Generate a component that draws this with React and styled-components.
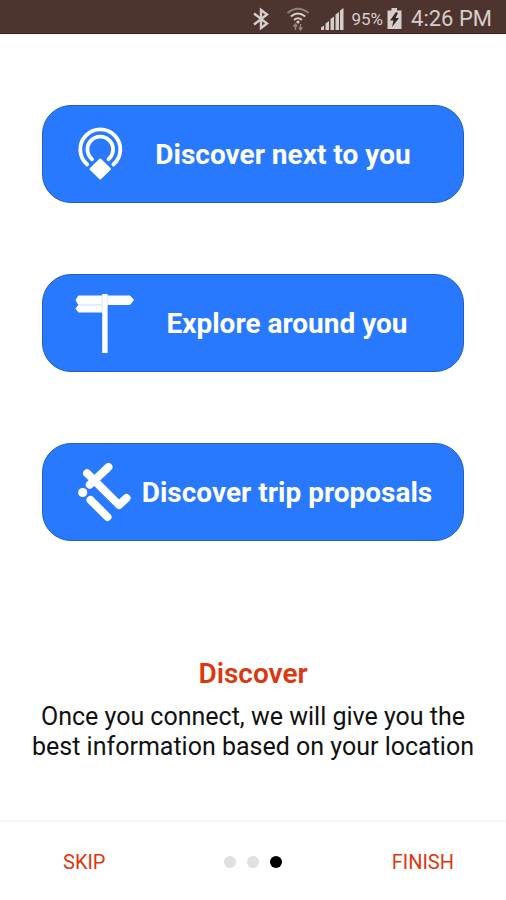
import React from "react";
import styled, { createGlobalStyle } from "styled-components";

const GlobalStyle = createGlobalStyle`
  * { box-sizing: border-box; }
  body { margin: 0; background: #fff; font-family: Roboto, sans-serif; }
  button { font-family: inherit; cursor: pointer; }
`;

const Screen = styled.div`
  display: flex;
  flex-direction: column;
  min-height: 100vh;
`;

const StatusBar = styled.header`
  display: flex;
  align-items: center;
  justify-content: flex-end;
  height: 34px;
  padding: 4px 14px 0 0;
  background: #4e342e;
  border-bottom: 1px solid #3a211d;
  color: #d6cdcb;
`;

const StatusIcon = styled.svg`
  display: block;
  flex: none;
  margin-right: ${(p) => p.$gap}px;
`;

const Battery = styled.span`
  margin-right: 4px;
  font-size: 17px;
`;

const Clock = styled.time`
  font-size: 22px;
`;

const Content = styled.main`
  flex: 1;
  padding: 71px 0 0;
`;

const Actions = styled.nav`
  display: flex;
  flex-direction: column;
  gap: 71px;
  padding: 0 42px;
`;

const ActionButton = styled.button`
  display: flex;
  align-items: center;
  width: 100%;
  height: 98px;
  padding: 2px 24px 0 32px;
  border: 1px solid #1f5fc4;
  border-radius: 29px;
  background: #2979ff;
  color: #fff;
`;

const ActionIcon = styled.svg`
  display: block;
  flex: none;
`;

const ActionLabel = styled.span`
  flex: 1;
  font-size: 28px;
  font-weight: 700;
  line-height: 32px;
  text-align: center;
  white-space: nowrap;
`;

const Caption = styled.section`
  padding: 116px 24px 0;
  text-align: center;
`;

const Title = styled.h1`
  margin: 0 0 11px;
  color: #dd3710;
  font-size: 28px;
  font-weight: 600;
  line-height: 34px;
`;

const Description = styled.p`
  margin: 0;
  color: #111;
  font-size: 25px;
  line-height: 30px;
`;

const Footer = styled.footer`
  display: grid;
  grid-template-columns: 1fr auto 1fr;
  align-items: center;
  height: 80px;
  padding-top: 1px;
  border-top: 2px solid #f7f7f7;
`;

const FooterButton = styled.button`
  padding: 8px;
  border: 0;
  background: none;
  color: #dd3710;
  font-size: 20px;
  font-weight: 400;
  line-height: 24px;
`;

const FooterSide = styled.div`
  display: flex;
  justify-content: ${(p) => p.$align};
  padding: 0 ${(p) => (p.$align === "flex-end" ? 44 : 55)}px;
`;

const Dots = styled.div`
  display: flex;
  gap: 11px;
`;

const Dot = styled.span`
  width: 12px;
  height: 12px;
  border-radius: 50%;
  background: ${(p) => (p.$active ? "#000" : "#e0e0e0")};
`;

const NearbyIcon = () => (
  <ActionIcon width="52" height="60" viewBox="0 0 52 60" fill="none" stroke="#fff" strokeWidth="3.8" strokeLinecap="round" aria-hidden="true">
    <path d="M12.2 39.5A20 20 0 1 1 38.4 39.5" />
    <path d="M17 34.2A12.8 12.8 0 1 1 33.5 34.2" />
    <path d="M25.2 34.5L35 44L25.2 53.5L15.5 44Z" fill="#fff" stroke="#fff" strokeWidth="2" strokeLinejoin="round" />
  </ActionIcon>
);

const SignpostIcon = () => (
  <ActionIcon width="60" height="60" viewBox="0 0 60 60" aria-hidden="true">
    <path d="M3.5 2H55L58.5 6L55 10.5H3.5L1 6Z" fill="#fff" stroke="#fff" strokeLinejoin="round" />
    <path d="M3.5 11.2H28V18H3.5L1 14.5Z" fill="#fff" stroke="#fff" strokeLinejoin="round" />
    <rect x="27.2" y="-1" width="5.4" height="60" fill="#fff" />
    <path d="M27.2 2V18M32.8 2V11" stroke="#b9d3ff" strokeWidth=".6" />
    <path d="M3 10.8H27" stroke="#c5daff" strokeWidth=".8" />
  </ActionIcon>
);

const TripIcon = () => (
  <ActionIcon width="60" height="60" viewBox="0 0 60 60" fill="none" stroke="#fff" strokeWidth="8" strokeLinecap="round" strokeLinejoin="round" aria-hidden="true">
    <path d="M12 10.2L44 42L51.5 35" />
    <path d="M33.5 4L14.8 21.7" />
    <path d="M15.5 37L32.5 54" />
    <circle cx="7.7" cy="29.5" r="4.6" fill="#fff" stroke="none" />
  </ActionIcon>
);

const ACTIONS = [
  { label: "Discover next to you", Icon: NearbyIcon },
  { label: "Explore around you", Icon: SignpostIcon },
  { label: "Discover trip proposals", Icon: TripIcon },
];

export default function App() {
  return (
    <>
      <GlobalStyle />
      <Screen>
        <StatusBar>
          <StatusIcon $gap={16} width="18" height="24" viewBox="0 0 18 24" fill="none" stroke="#d6cdcb" strokeWidth="2.4" aria-hidden="true">
            <path d="M2 6.5L15 16.5L9 21V3L15 7.5L2 17.5" />
          </StatusIcon>
          <StatusIcon $gap={10} width="24" height="26" viewBox="0 0 24 26" fill="none" stroke="#d6cdcb" strokeWidth="2" aria-hidden="true">
            <path d="M1.5 7Q12-1.5 22.5 7" stroke="#93817c" />
            <path d="M4.8 10.5Q12 4.5 19.2 10.5" />
            <path d="M8 14Q12 10.5 16 14" />
            <circle cx="12" cy="16" r="1.6" fill="#d6cdcb" stroke="none" />
            <path d="M9.5 24V18.5M7.5 20.5L9.5 18L11 20.5M14.5 18V24M13 21.5L14.5 24L16.5 21.5" stroke="#93817c" strokeWidth="1.5" />
          </StatusIcon>
          <StatusIcon $gap={7} width="24" height="24" viewBox="0 0 24 24" fill="#d6cdcb" aria-hidden="true">
            <path d="M1 23V20.5L4 18.5V23ZM5.5 23V16.5L9 14V23ZM10.5 23V12L14 9.5V23ZM15.5 23V7.5L19 5V23ZM20 23V3.5L23.5 1V23Z" />
          </StatusIcon>
          <Battery>95%</Battery>
          <StatusIcon $gap={9} width="15" height="24" viewBox="0 0 15 24" aria-hidden="true">
            <path d="M4.5 1H10V3.5H14.5V22H.5V3.5H4.5Z" fill="#d6cdcb" />
            <path d="M9 5L3 13.5H6.5L5 20L12 11H8.5L11 6Z" fill="#3a2421" />
          </StatusIcon>
          <Clock>4:26 PM</Clock>
        </StatusBar>
        <Content>
          <Actions>
            {ACTIONS.map(({ label, Icon }) => (
              <ActionButton key={label} type="button">
                <Icon />
                <ActionLabel>{label}</ActionLabel>
              </ActionButton>
            ))}
          </Actions>
          <Caption>
            <Title>Discover</Title>
            <Description>Once you connect, we will give you the best information based on your location</Description>
          </Caption>
        </Content>
        <Footer>
          <FooterSide $align="flex-start">
            <FooterButton type="button">SKIP</FooterButton>
          </FooterSide>
          <Dots>
            <Dot />
            <Dot />
            <Dot $active />
          </Dots>
          <FooterSide $align="flex-end">
            <FooterButton type="button">FINISH</FooterButton>
          </FooterSide>
        </Footer>
      </Screen>
    </>
  );
}
